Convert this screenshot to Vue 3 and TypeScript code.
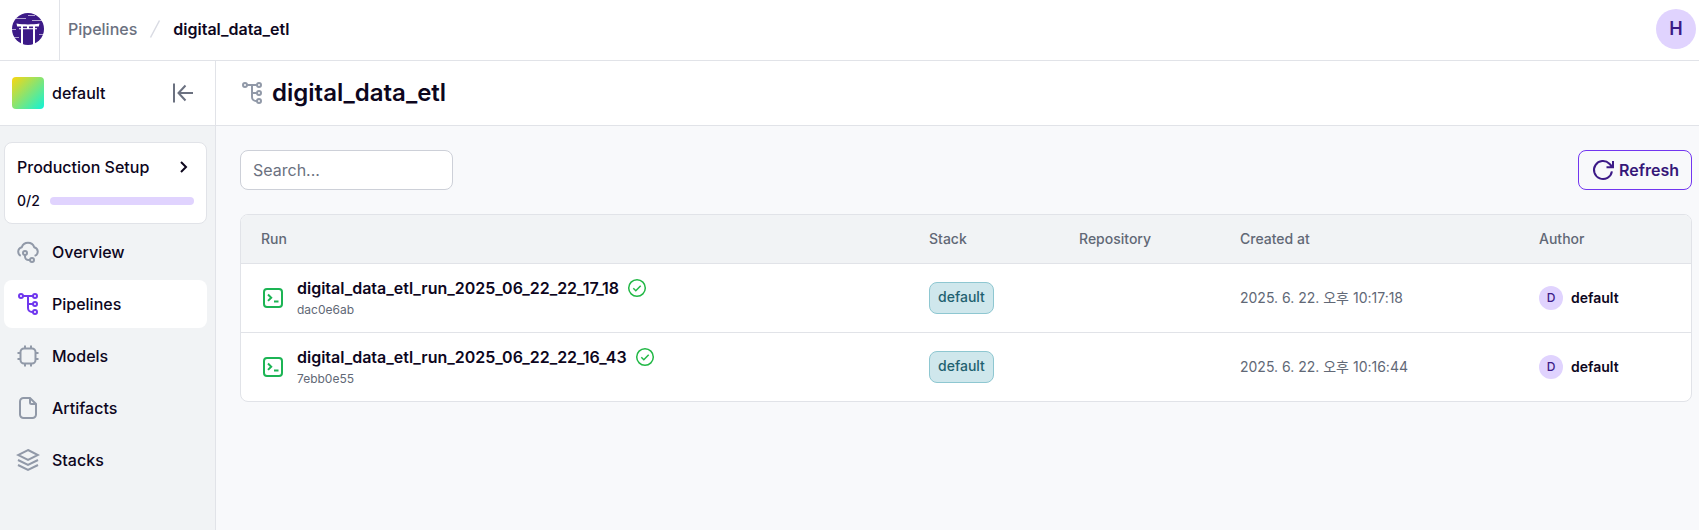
<script setup lang="ts">
import { ref, computed } from 'vue'

interface NavItem {
  label: string
  icon: 'cloud' | 'pipeline' | 'chip' | 'file' | 'layers'
}

interface Run {
  name: string
  id: string
  stack: string
  repository: string
  createdAt: string
  author: string
}

const navItems: NavItem[] = [
  { label: 'Overview', icon: 'cloud' },
  { label: 'Pipelines', icon: 'pipeline' },
  { label: 'Models', icon: 'chip' },
  { label: 'Artifacts', icon: 'file' },
  { label: 'Stacks', icon: 'layers' },
]

const runs: Run[] = [
  {
    name: 'digital_data_etl_run_2025_06_22_22_17_18',
    id: 'dac0e6ab',
    stack: 'default',
    repository: '',
    createdAt: '2025. 6. 22. 오후 10:17:18',
    author: 'default',
  },
  {
    name: 'digital_data_etl_run_2025_06_22_22_16_43',
    id: '7ebb0e55',
    stack: 'default',
    repository: '',
    createdAt: '2025. 6. 22. 오후 10:16:44',
    author: 'default',
  },
]

const active = ref('Pipelines')
const search = ref('')
const done = 0
const total = 2

const visibleRuns = computed(() =>
  runs.filter((run) => run.name.includes(search.value.trim().toLowerCase())),
)
</script>

<template>
  <div class="app">
    <header class="topbar">
      <a class="brand" href="#" aria-label="Home">
        <svg width="32" height="32" viewBox="0 0 32 32" aria-hidden="true">
          <circle cx="16" cy="16" r="16" fill="#3c1a87" />
          <g fill="#fff">
            <path d="M4.500 10.500c7 1.200 16 1.200 23 0l-.7 2.900H5.200z" />
            <path d="M7 15h18v1.300H7z" opacity=".8" />
            <rect x="9" y="13" width="2" height="18" />
            <rect x="21" y="13" width="2" height="18" />
            <rect x="15" y="13" width="2" height="3" />
          </g>
          <g stroke="#fff" stroke-width="1" opacity=".6">
            <path d="M16 2.500h7M4 5.500h10M20 7.500h10M0 16.500h4M27 21.500h5M2 24.500h5" />
          </g>
        </svg>
      </a>
      <nav class="crumbs" aria-label="Breadcrumb">
        <a href="#">Pipelines</a>
        <svg width="12" height="20" viewBox="0 0 12 20" aria-hidden="true">
          <path d="M1.500 18.500l9-17" stroke="#d9dbe3" stroke-width="1.500" fill="none" />
        </svg>
        <a class="current" href="#" aria-current="page">digital_data_etl</a>
      </nav>
      <button class="user" type="button" aria-label="Account">H</button>
    </header>

    <div class="body">
      <aside class="sidebar">
        <div class="project">
          <span class="swatch"></span>
          <span class="project-name">default</span>
          <button class="plain collapse" type="button" aria-label="Collapse sidebar">
            <svg class="icon" viewBox="0 0 24 24">
              <path d="M3 2.500v19M22 12H8M14.500 4.500L7.500 12l7 7.500" />
            </svg>
          </button>
        </div>

        <div class="side-content">
          <a class="setup" href="#">
            <span class="setup-title">
              Production Setup
              <svg class="chevron" width="20" height="20" viewBox="0 0 20 20" aria-hidden="true">
                <path d="M7 5l5 5-5 5" />
              </svg>
            </span>
            <span class="setup-progress">
              {{ done }}/{{ total }}
              <span class="track">
                <span class="fill" :style="{ width: (done / total) * 100 + '%' }"></span>
              </span>
            </span>
          </a>

          <nav class="menu" aria-label="Main">
            <a
              v-for="item in navItems"
              :key="item.label"
              href="#"
              :class="{ active: item.label === active }"
              @click.prevent="active = item.label"
            >
              <svg class="icon" viewBox="0 0 24 24" aria-hidden="true">
                <template v-if="item.icon === 'cloud'">
                  <path d="M4.700 15.800A4.600 4.600 0 0 1 2.200 11.700 4.800 4.800 0 0 1 5.800 7.200 6.600 6.600 0 0 1 18.200 7.200 4.800 4.800 0 0 1 21.800 11.700 4.600 4.600 0 0 1 18.600 15.900" />
                  <circle cx="9" cy="13" r="2" />
                  <circle cx="16" cy="20" r="2" />
                  <path d="M9 15v1.500A3.500 3.500 0 0 0 12.500 20H14" />
                </template>
                <template v-else-if="item.icon === 'pipeline'">
                  <circle cx="5" cy="4" r="2" />
                  <circle cx="19" cy="4" r="2" />
                  <circle cx="19" cy="12" r="2" />
                  <circle cx="19" cy="20" r="2" />
                  <path d="M7 4h10M12 4v12a4 4 0 0 0 4 4h1M12 12h5" />
                </template>
                <template v-else-if="item.icon === 'chip'">
                  <rect x="4.500" y="4.500" width="15" height="15" rx="3.500" />
                  <path d="M9 1.500v3M15 1.500v3M9 19.500v3M15 19.500v3M1.500 9h3M1.500 15h3M19.500 9h3M19.500 15h3" />
                </template>
                <template v-else-if="item.icon === 'file'">
                  <path d="M14 2H7.500A3.500 3.500 0 0 0 4 5.500v13A3.500 3.500 0 0 0 7.500 22h9a3.500 3.500 0 0 0 3.500-3.500V8z" />
                  <path d="M14 2.500V6.500a1.500 1.500 0 0 0 1.500 1.500H19.500" />
                </template>
                <template v-else>
                  <path d="M12 2l10 5-10 5-10-5z" />
                  <path d="M2 12l10 5 10-5M2 17l10 5 10-5" />
                </template>
              </svg>
              {{ item.label }}
            </a>
          </nav>
        </div>
      </aside>

      <main class="main">
        <div class="title">
          <svg class="icon" viewBox="0 0 24 24" aria-hidden="true">
            <circle cx="5" cy="4" r="2" />
            <circle cx="19" cy="4" r="2" />
            <circle cx="19" cy="12" r="2" />
            <circle cx="19" cy="20" r="2" />
            <path d="M7 4h10M12 4v12a4 4 0 0 0 4 4h1M12 12h5" />
          </svg>
          <h1>digital_data_etl</h1>
        </div>

        <div class="content">
          <div class="toolbar">
            <input v-model="search" type="text" placeholder="Search..." aria-label="Search runs" />
            <button class="refresh" type="button">
              <svg class="icon" viewBox="0 0 24 24" aria-hidden="true">
                <path d="M20.900 13.400A9 9 0 1 1 18.400 5.700L21.500 9M22 3v6.200H15.500" />
              </svg>
              Refresh
            </button>
          </div>

          <div class="table-card">
            <table>
              <colgroup>
                <col />
                <col class="c-stack" />
                <col class="c-repo" />
                <col class="c-created" />
                <col class="c-author" />
              </colgroup>
              <thead>
                <tr>
                  <th scope="col">Run</th>
                  <th scope="col">Stack</th>
                  <th scope="col">Repository</th>
                  <th scope="col">Created at</th>
                  <th scope="col">Author</th>
                </tr>
              </thead>
              <tbody>
                <tr v-for="run in visibleRuns" :key="run.id">
                  <td>
                    <div class="run">
                      <svg class="icon green" viewBox="0 0 24 24" aria-hidden="true">
                        <rect x="3" y="3" width="18" height="18" rx="3" />
                        <path d="M7 8.500l3.200 3.200L7 14.900M13 15.500h4.500" />
                      </svg>
                      <div>
                        <div class="run-name">
                          <a href="#">{{ run.name }}</a>
                          <svg class="check" width="20" height="20" viewBox="0 0 20 20" role="img" aria-label="Completed">
                            <circle cx="10" cy="10" r="8.300" />
                            <path d="M6.300 10.300l2.500 2.400 4.900-4.900" />
                          </svg>
                        </div>
                        <div class="run-id">{{ run.id }}</div>
                      </div>
                    </div>
                  </td>
                  <td><a class="pill" href="#">{{ run.stack }}</a></td>
                  <td>{{ run.repository }}</td>
                  <td>{{ run.createdAt }}</td>
                  <td>
                    <div class="author">
                      <span class="avatar">{{ run.author.charAt(0).toUpperCase() }}</span>
                      {{ run.author }}
                    </div>
                  </td>
                </tr>
              </tbody>
            </table>
          </div>
        </div>
      </main>
    </div>
  </div>
</template>

<style>
body {
  margin: 0;
}
</style>

<style scoped>
.app {
  display: flex;
  flex-direction: column;
  min-height: 100vh;
  background: #f8f9fb;
  color: #0d061d;
  font-family: Inter, "Noto Sans CJK KR", sans-serif;
  font-optical-sizing: none;
  font-size: 16px;
  line-height: 24px;
}

.app *,
.app {
  box-sizing: border-box;
}

a {
  color: inherit;
  text-decoration: none;
}

button {
  font: inherit;
  font-optical-sizing: none;
  cursor: pointer;
}

.icon {
  flex: none;
  width: 24px;
  height: 24px;
  fill: none;
  stroke: #9199a8;
  stroke-width: 2;
}

.topbar {
  display: flex;
  border-bottom: 1px solid #e1e3e8;
  background: #fff;
}

.brand {
  display: flex;
  padding: 13px 15px 15px 12px;
  border-right: 1px solid #e1e3e8;
}

.crumbs {
  display: flex;
  flex: 1;
  align-items: center;
  gap: 12px;
  padding: 0 8px 2px;
  color: #6b7180;
  font-weight: 500;
}

.current {
  color: #0d061d;
  font-weight: 600;
}

.user {
  width: 40px;
  height: 40px;
  margin: 9px 3px 0 0;
  padding: 0;
  border: 0;
  border-radius: 50%;
  background: #e0d3fe;
  color: #3c1a87;
  font-size: 18px;
  font-weight: 600;
}

.body {
  display: flex;
  flex: 1;
}

.sidebar {
  flex: none;
  width: 216px;
  border-right: 1px solid #e1e3e8;
  background: #f1f3f5;
}

.project {
  display: flex;
  align-items: center;
  gap: 8px;
  height: 65px;
  padding: 0 20px 0 12px;
  border-bottom: 1px solid #e1e3e8;
  background: #fff;
  font-weight: 500;
}

.swatch {
  width: 32px;
  height: 32px;
  border-radius: 4px;
  background: linear-gradient(135deg, #fbd60f, #0ff3d8);
}

.plain {
  display: flex;
  padding: 0;
  border: 0;
  background: none;
}

.collapse {
  margin-left: auto;
}

.collapse .icon {
  stroke: #6b7180;
}

.side-content {
  display: flex;
  flex-direction: column;
  gap: 4px;
  padding: 16px 8px 16px 4px;
}

.setup {
  display: flex;
  flex-direction: column;
  gap: 12px;
  padding: 12px;
  border: 1px solid #e1e3e8;
  border-radius: 8px;
  background: #fff;
  font-weight: 500;
}

.setup-title {
  display: flex;
  align-items: center;
  justify-content: space-between;
}

.chevron {
  fill: none;
  stroke: #0d061d;
  stroke-width: 2;
}

.setup-progress {
  display: flex;
  align-items: center;
  gap: 10px;
  font-size: 14px;
  line-height: 20px;
}

.track {
  flex: 1;
  height: 8px;
  overflow: hidden;
  border-radius: 4px;
  background: #e0d3fe;
}

.fill {
  display: block;
  height: 100%;
  background: #7a3ef4;
}

.menu {
  display: flex;
  flex-direction: column;
  gap: 4px;
}

.menu a {
  display: flex;
  align-items: center;
  gap: 12px;
  padding: 12px;
  border-radius: 8px;
  font-weight: 500;
}

.menu .active {
  background: #fff;
}

.active .icon {
  stroke: #6f37ee;
}

.main {
  flex: 1;
  min-width: 0;
}

.title {
  display: flex;
  align-items: center;
  gap: 8px;
  height: 65px;
  padding: 0 24px;
  border-bottom: 1px solid #e1e3e8;
  background: #fff;
}

h1 {
  margin: 0;
  font-size: 24px;
  font-weight: 600;
  line-height: 32px;
}

.content {
  display: flex;
  flex-direction: column;
  gap: 24px;
  padding: 24px 7px 24px 24px;
}

.toolbar {
  display: flex;
  justify-content: space-between;
}

.toolbar input {
  width: 213px;
  height: 40px;
  padding: 0 12px;
  border: 1px solid #cdd0d8;
  border-radius: 8px;
  background: #fff;
  color: #0d061d;
  font: inherit;
  font-optical-sizing: none;
}

.toolbar input::placeholder {
  color: #6b7180;
  opacity: 1;
}

.refresh {
  display: flex;
  align-items: center;
  gap: 4px;
  height: 40px;
  padding: 0 12px;
  border: 1px solid #7236f0;
  border-radius: 8px;
  background: transparent;
  color: #351778;
  font-weight: 600;
}

.refresh .icon {
  stroke: #3c1a87;
}

.table-card {
  overflow: hidden;
  border: 1px solid #e1e3e8;
  border-radius: 8px;
  background: #fff;
}

table {
  width: 100%;
  border-collapse: separate;
  border-spacing: 0;
  table-layout: fixed;
  color: #616876;
  font-size: 14px;
  line-height: 20px;
}

.c-stack {
  width: 150px;
}

.c-repo {
  width: 161px;
}

.c-created {
  width: 299px;
}

.c-author {
  width: 172px;
}

th {
  padding: 14px 20px;
  border-bottom: 1px solid #e1e3e8;
  background: #f1f3f5;
  font-weight: 500;
  text-align: left;
}

td {
  padding: 12px 20px;
}

tbody tr:not(:last-child) td {
  border-bottom: 1px solid #e1e3e8;
}

.run {
  display: flex;
  align-items: center;
  gap: 12px;
}

.green {
  stroke: #1cb454;
}

.run-name {
  display: flex;
  align-items: center;
  gap: 8px;
  color: #0d061d;
  font-size: 16px;
  font-weight: 600;
  line-height: 24px;
}

.check {
  flex: none;
  fill: none;
  stroke: #22b846;
  stroke-width: 1.5px;
}

.run-id {
  font-size: 12px;
}

.pill {
  display: inline-block;
  padding: 4px 8px 6px;
  border: 1px solid #8ec7d1;
  border-radius: 8px;
  background: #cfe7ec;
  color: #1f6170;
  font-weight: 500;
  vertical-align: middle;
}

.author {
  display: flex;
  align-items: center;
  gap: 8px;
  color: #0d061d;
  font-weight: 600;
}

.avatar {
  width: 24px;
  border-radius: 50%;
  background: #e0d3fe;
  color: #3c1a87;
  font-size: 12px;
  font-weight: 500;
  line-height: 24px;
  text-align: center;
}
</style>
